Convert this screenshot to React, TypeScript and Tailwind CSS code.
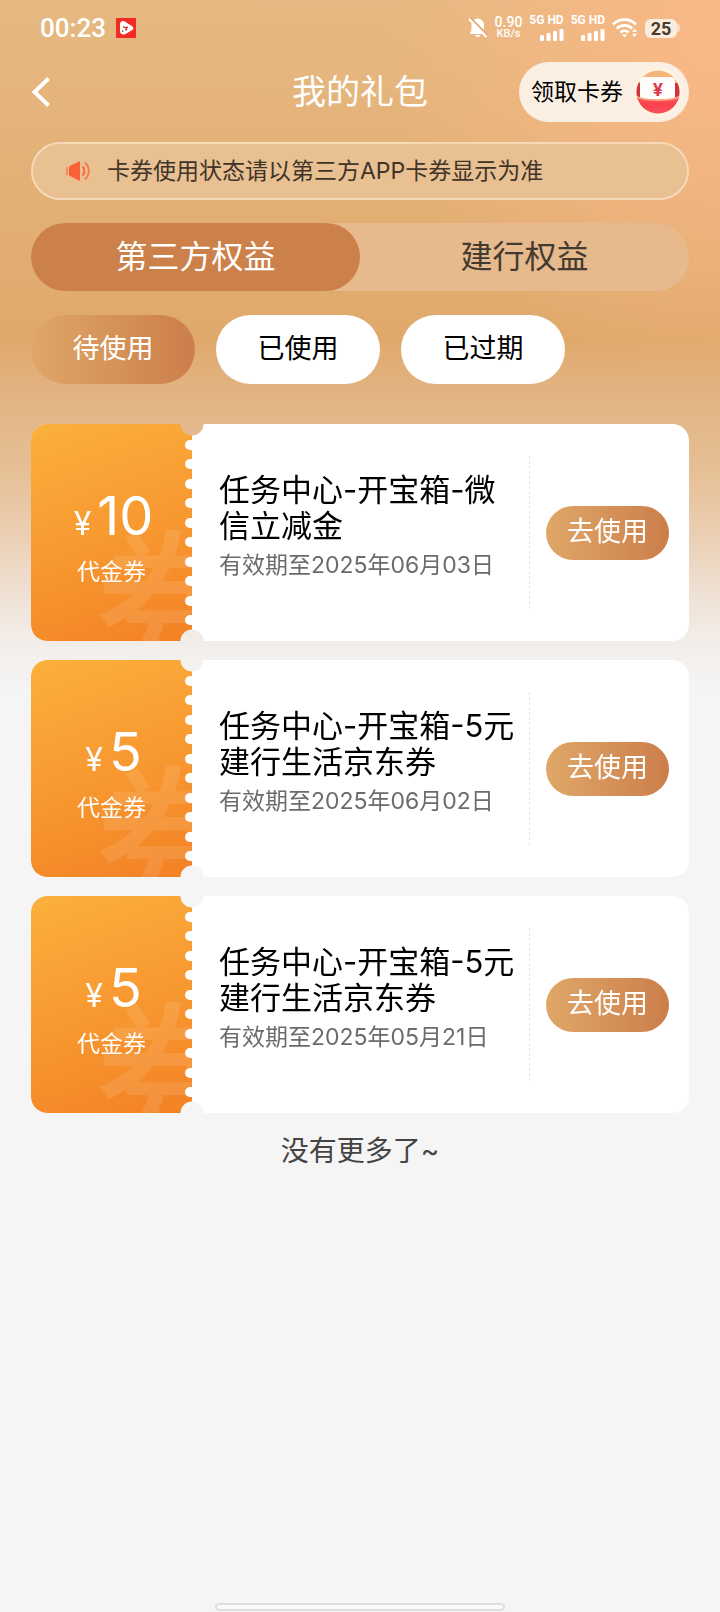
import clsx from 'clsx';
import { useState } from 'react';

interface Coupon {
  id: number;
  amount: number;
  kind: string;
  title: string;
  expires: string;
}

const COUPONS: Coupon[] = [
  { id: 1, amount: 10, kind: '代金券', title: '任务中心-开宝箱-微信立减金', expires: '2025年06月03日' },
  { id: 2, amount: 5, kind: '代金券', title: '任务中心-开宝箱-5元建行生活京东券', expires: '2025年06月02日' },
  { id: 3, amount: 5, kind: '代金券', title: '任务中心-开宝箱-5元建行生活京东券', expires: '2025年05月21日' },
];

const TABS = ['第三方权益', '建行权益'];
const FILTERS = ['待使用', '已使用', '已过期'];

function Signal() {
  return (
    <div className="flex flex-col items-end gap-1">
      <span className="text-xs leading-[10px] font-bold">5G HD</span>
      <svg width="24" height="12" viewBox="0 0 24 12" fill="currentColor">
        <rect x="0" y="6" width="4" height="6" rx="1" />
        <rect x="6.5" y="4" width="4" height="8" rx="1" />
        <rect x="13" y="2" width="4" height="10" rx="1" />
        <rect x="19.5" y="0" width="4" height="12" rx="1" />
      </svg>
    </div>
  );
}

function StatusBar() {
  return (
    <div className="flex h-14 items-center justify-between px-10 font-[Roboto,sans-serif] text-white">
      <div className="flex items-center gap-2.5">
        <span className="text-[26px] leading-8 font-medium">00:23</span>
        <svg width="20" height="20" viewBox="0 0 20 20">
          <rect width="20" height="20" fill="#f22c22" />
          <path d="M4 6.5C4 3 7 2 10 4.2L15 7.4C18 9 18 11.500 15 12.800L9.500 16C6.500 17.500 4 16 4 13z" fill="#fff" />
          <path d="M7 8.500l2.200 1.200L12 9.200M9.500 12.500l1.500-2" stroke="#d8262a" strokeWidth="1.300" fill="none" />
          <circle cx="6.500" cy="13" r="0.800" fill="#333" />
        </svg>
      </div>
      <div className="flex items-center gap-[7px]">
        <svg width="20" height="22" viewBox="0 0 20 22" fill="currentColor">
          <path d="M9.500 1.500a6.500 6.500 0 0 1 6.500 6.500v5.500l2 2.500v1H2v-1l1.500-2.500V8A6.500 6.500 0 0 1 9.500 1.500z" />
          <path d="M7 18h5.500a2.800 2.600 0 0 1-5.500 0z" />
          <path d="M2.500 1L20 18.500" stroke="#e6ad75" strokeWidth="2" />
          <path d="M1 2l17.500 18" stroke="currentColor" strokeWidth="2" />
        </svg>
        <div className="flex flex-col items-center">
          <span className="text-sm leading-[11px] font-medium">0.90</span>
          <span className="text-[11px] leading-[11px] font-medium">KB/s</span>
        </div>
        <Signal />
        <Signal />
        <svg width="26" height="22" viewBox="0 0 26 22" fill="none" stroke="currentColor" strokeWidth="2.800">
          <path d="M1 7.500a16 16 0 0 1 23 0" />
          <path d="M4.800 11.600a11 11 0 0 1 15.400 0" />
          <path d="M8.500 15.400a5.800 5.800 0 0 1 8 0" />
          <path d="M10 17.500h5L12.500 20.500z" fill="currentColor" stroke="none" />
          <path d="M20 15l2.500-3.500 2.500 3.500zM20 16.800l2.500 3.500 2.500-3.500z" fill="currentColor" stroke="none" />
        </svg>
        <div className="flex items-center">
          <span className="w-8 rounded-md bg-[#fbece0] text-center text-lg leading-[19px] font-bold text-[#4a3a2c]">25</span>
          <span className="h-2 w-[3px] rounded-r-full bg-[#fbdcc4]" />
        </div>
      </div>
    </div>
  );
}

function EnvelopeIcon() {
  return (
    <svg width="50" height="50" viewBox="0 0 50 50">
      <defs>
        <linearGradient id="pocket" x1="0" y1="0" x2="0" y2="1">
          <stop offset="0" stopColor="#ff7466" />
          <stop offset="0.400" stopColor="#f9404f" />
          <stop offset="1" stopColor="#fb5560" />
        </linearGradient>
        <clipPath id="disc">
          <circle cx="25" cy="25" r="21.500" />
        </clipPath>
      </defs>
      <circle cx="25" cy="25" r="24.500" fill="#fff3e2" />
      <circle cx="25" cy="25" r="21.500" fill="#f5b47c" />
      <g clipPath="url(#disc)">
        <rect x="3" y="16" width="44" height="18" rx="2" fill="#cf3540" />
        <rect x="7" y="10" width="35" height="25" rx="3" fill="#fffcfc" />
        <path d="M2 28c4 3.500 12 4.500 23 4.500S44 31.500 48 28v22H2z" fill="url(#pocket)" />
        <path d="M2 28.500c4 3.500 12 4.500 23 4.500s19-1 23-4.500" stroke="#fba982" strokeWidth="1.800" fill="none" />
      </g>
      <text x="25" y="29" textAnchor="middle" fontSize="18" fontWeight="700" fill="#dc3848">¥</text>
    </svg>
  );
}

function Header() {
  return (
    <header className="grid h-18 grid-cols-[1fr_auto_1fr] items-center">
      <button aria-label="返回" className="justify-self-start text-white">
        <svg width="20" height="32" viewBox="0 0 20 32" fill="none" stroke="currentColor" strokeWidth="4">
          <path d="M17.500 2.500L3.500 16l14 13.500" />
        </svg>
      </button>
      <h1 className="text-[34px] leading-10 text-white">我的礼包</h1>
      <button className="flex h-15 items-center gap-2.5 justify-self-end rounded-full bg-[#fbefe4] pr-1.5 pl-3 text-[23px] text-black">
        领取卡券
        <EnvelopeIcon />
      </button>
    </header>
  );
}

function Notice() {
  return (
    <div className="mt-3.5 flex h-[58px] items-center gap-4 rounded-full border-2 border-[#f6d9b8] bg-[#e8c092] px-8 text-[23px] text-[#403428]">
      <svg width="26" height="22" viewBox="0 0 26 22" fill="none">
        <path d="M2 7v8" stroke="#f98a62" strokeWidth="2" />
        <path d="M4 6.500L15 1v20L4 15.500z" fill="#fa5f35" />
        <path d="M17.500 6.500c2.500 2.500 2.500 6.500 0 9" stroke="#fa6a40" strokeWidth="2" />
        <path d="M20 2.500c5 4.500 5 12.500 0 17" stroke="#fa7a52" strokeWidth="2" />
      </svg>
      <p>卡券使用状态请以第三方APP卡券显示为准</p>
    </div>
  );
}

function CouponCard({ coupon }: { coupon: Coupon }) {
  return (
    <li className="flex min-h-[217px] overflow-hidden rounded-2xl bg-white [mask-composite:intersect] [mask-image:radial-gradient(circle_at_161px_0,transparent_11px,black_12px),radial-gradient(circle_at_161px_100%,transparent_11px,black_12px)]">
      <div className="relative flex w-[161px] shrink-0 flex-col items-center overflow-hidden bg-linear-160 from-[#fbb03d] to-[#f38124] pt-15 text-white">
        <span aria-hidden="true" className="absolute top-26 left-16 text-[150px] leading-none font-medium text-white/10">
          券
        </span>
        <div aria-hidden="true" className="absolute inset-y-4 right-0 flex flex-col justify-between">
          {Array.from({ length: 10 }, (_, i) => (
            <span key={i} className="h-2.5 w-[7px] rounded-l-full bg-white" />
          ))}
        </div>
        <div className="relative flex items-baseline gap-1.5 pl-1">
          <span className="text-[32px]">¥</span>
          <span className="text-[54px] leading-[64px]">{coupon.amount}</span>
        </div>
        <span className="relative mt-2 text-[23px] leading-8">{coupon.kind}</span>
      </div>

      <div className="min-w-0 flex-1 pt-12 pr-2 pl-[27px]">
        <h2 className="text-[31px] leading-9 text-black">{coupon.title}</h2>
        <p className="mt-1.5 text-[23px] leading-[30px] text-[#6b6b6b]">有效期至{coupon.expires}</p>
      </div>

      <div className="my-8 flex items-center border-l border-dashed border-[#e6e6e6] pr-5 pl-4">
        <button className="h-[54px] w-[123px] rounded-full bg-linear-to-r from-[#dfa768] to-[#cc7e4a] text-[27px] text-white">
          去使用
        </button>
      </div>
    </li>
  );
}

export default function App() {
  const [tab, setTab] = useState(TABS[0]);
  const [filter, setFilter] = useState(FILTERS[0]);

  return (
    <div className="relative flex min-h-screen flex-col bg-[#f5f5f5] bg-[radial-gradient(circle_at_100%_40px,#fab887_0,#fab88700_340px),linear-gradient(180deg,#e6b982_0,#e0a96b_340px,#e2b484_395px,#e6bf95_470px,#ebcfb3_535px,#f0e3d8_600px,#f3eeea_645px,#f5f5f5_690px)] bg-no-repeat font-[Inter,'Noto_Sans_CJK_SC',sans-serif]">
      <StatusBar />
      <main className="flex-1 px-[31px]">
        <Header />
        <Notice />

        <div role="tablist" className="mt-[23px] flex h-[68px] rounded-full bg-[#e6ba8d]">
          {TABS.map((t) => (
            <button
              key={t}
              role="tab"
              aria-selected={t === tab}
              onClick={() => setTab(t)}
              className={clsx('flex-1 rounded-full text-[32px]', t === tab ? 'bg-[#cd814a] text-white' : 'text-[#443a30]')}
            >
              {t}
            </button>
          ))}
        </div>

        <div className="mt-6 flex gap-[21px]">
          {FILTERS.map((f) => (
            <button
              key={f}
              aria-pressed={f === filter}
              onClick={() => setFilter(f)}
              className={clsx(
                'h-[69px] w-[164px] rounded-full text-[27px]',
                f === filter ? 'bg-linear-to-r from-[#dfa768] to-[#cc7e4a] text-white' : 'bg-white text-black',
              )}
            >
              {f}
            </button>
          ))}
        </div>

        <ul className="mt-10 flex flex-col gap-[19px]">
          {COUPONS.map((c) => (
            <CouponCard key={c.id} coupon={c} />
          ))}
        </ul>

        <p className="mt-5 text-center text-[28px] leading-9 text-[#444]">没有更多了~</p>
      </main>
      <div className="mb-px h-2 w-[290px] self-center rounded-full border-2 border-[#dfdfdf] bg-[#fafafa]" />
    </div>
  );
}
